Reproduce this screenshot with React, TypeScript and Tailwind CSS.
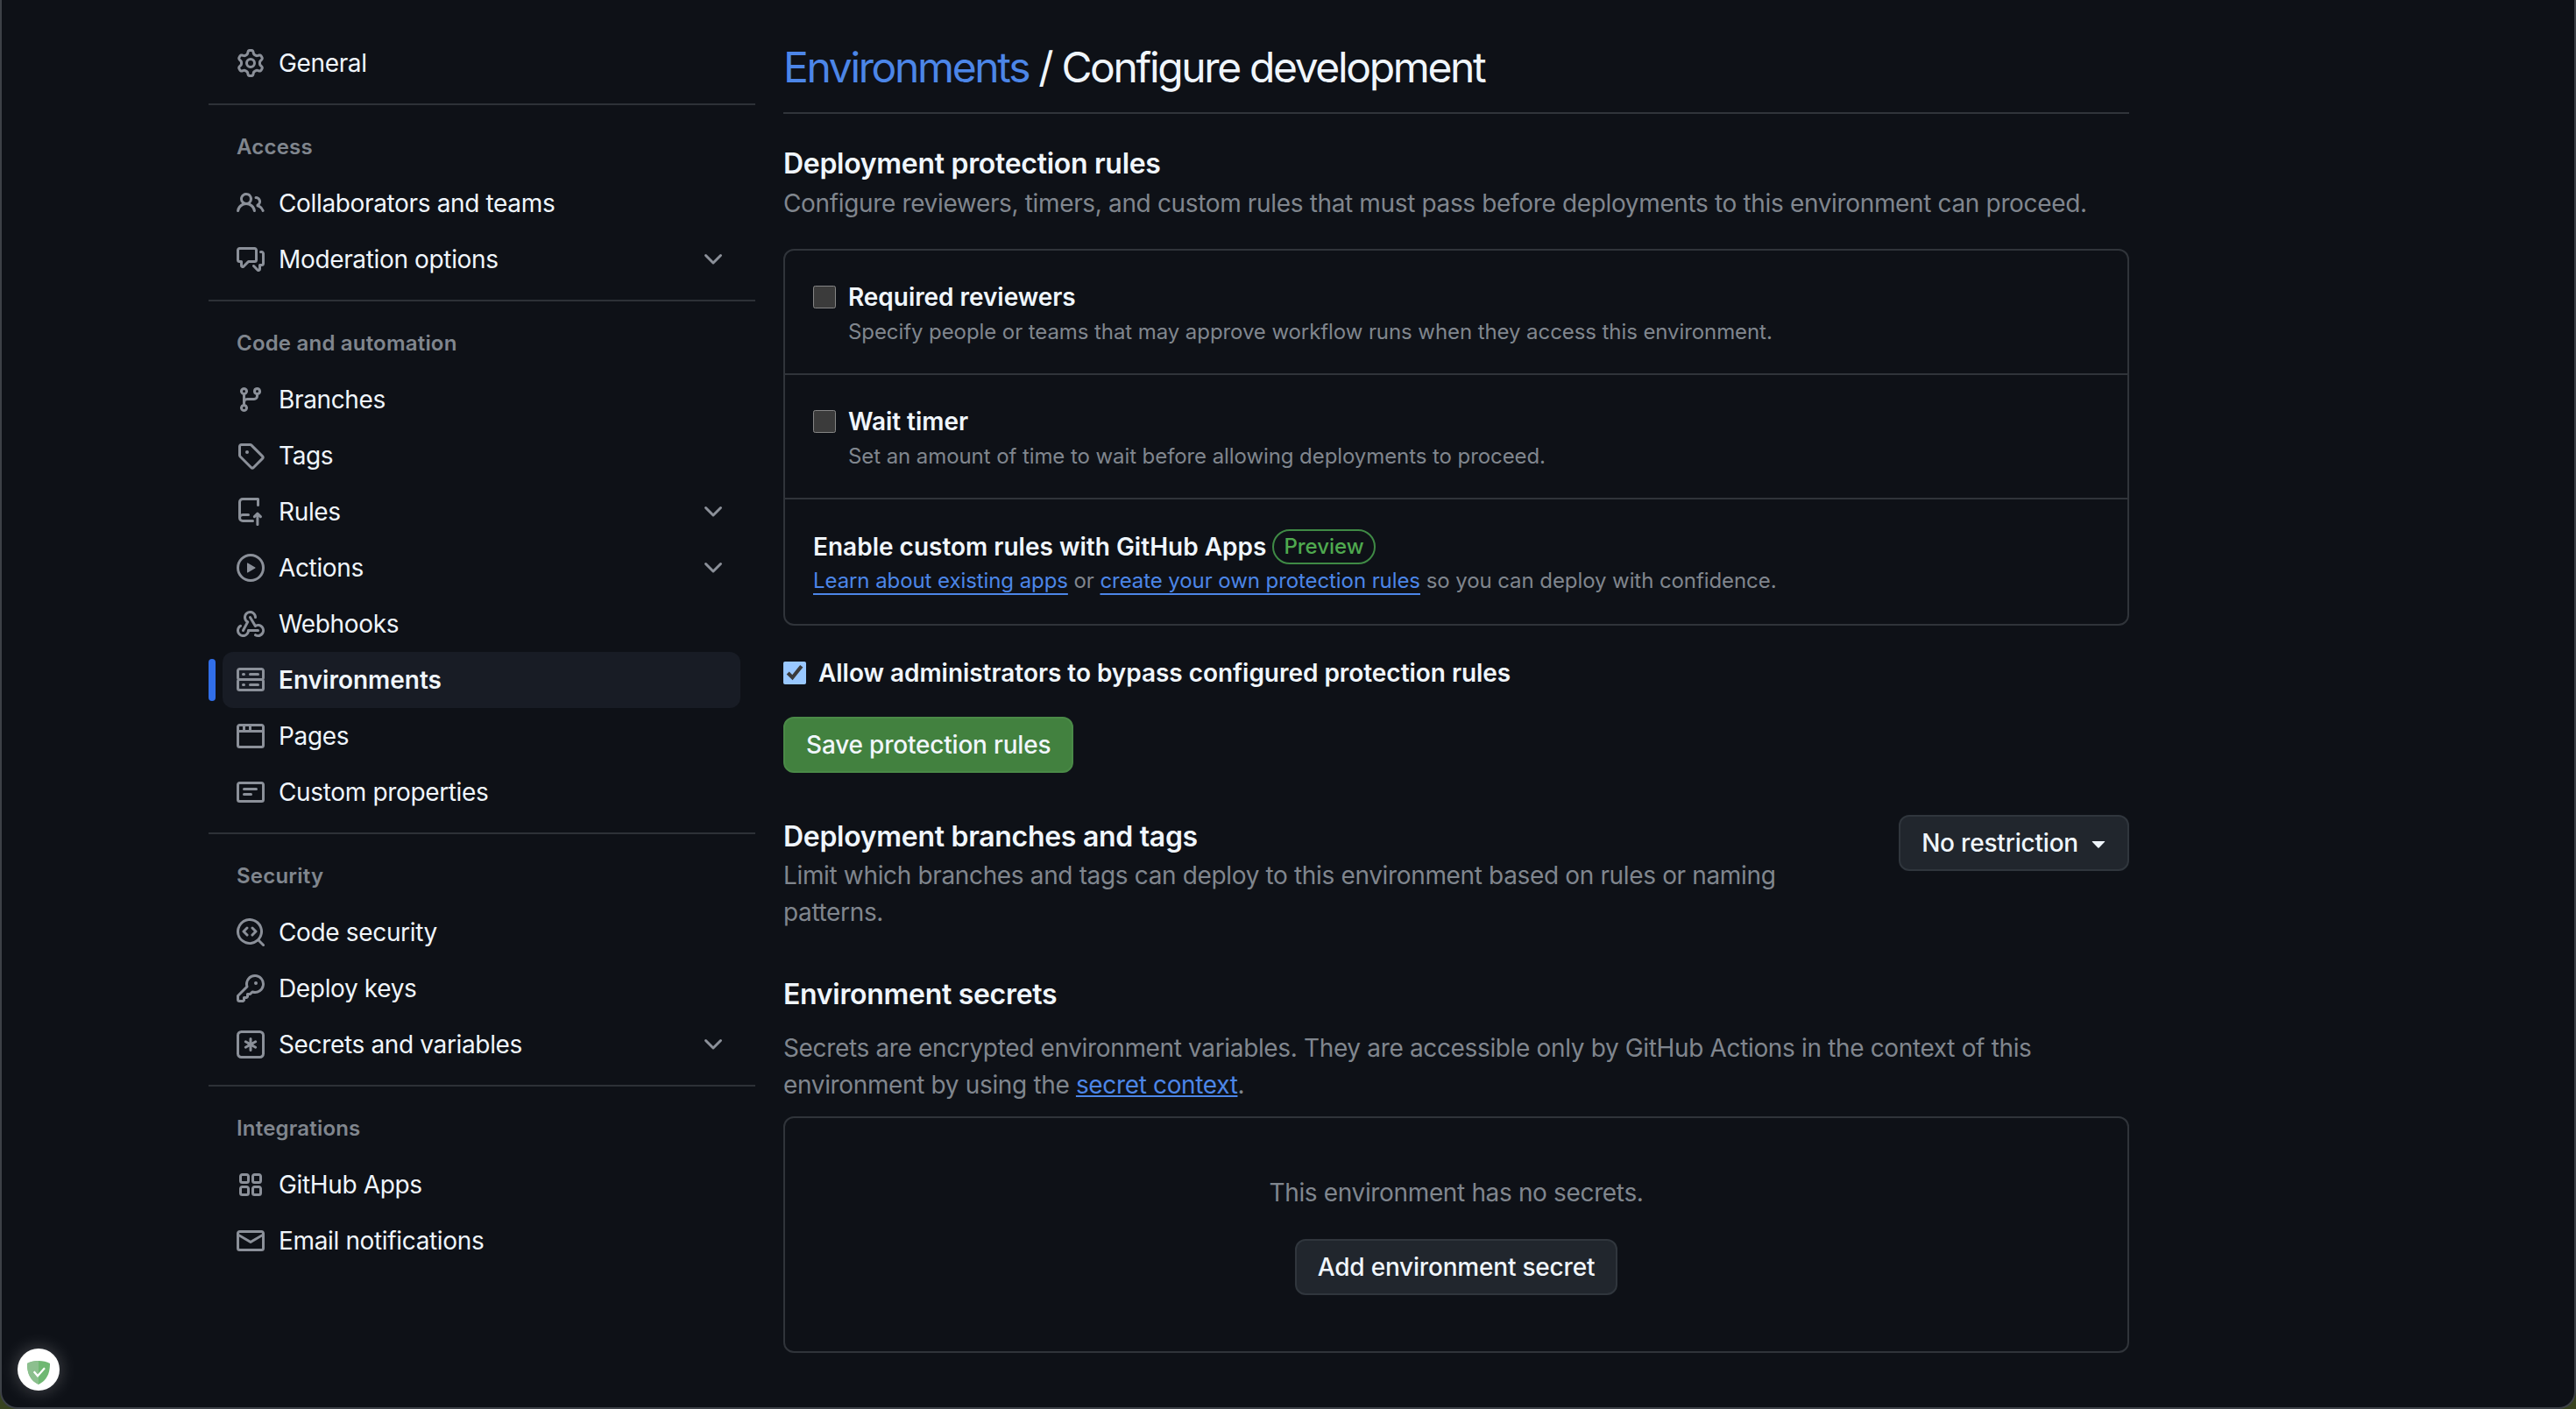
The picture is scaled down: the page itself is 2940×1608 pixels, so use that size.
import type { ReactNode } from 'react';

// octicons, 16px grid
const paths = {
  gear: 'M8 0a8.2 8.2 0 0 1 .701.031C9.444.095 9.99.645 10.16 1.29l.288 1.107c.018.066.079.158.212.224.231.114.454.243.668.386.123.082.233.09.299.071l1.103-.303c.644-.176 1.392.021 1.82.63.27.385.506.792.704 1.218.315.675.111 1.422-.364 1.891l-.814.806c-.049.048-.098.147-.088.294.016.257.016.515 0 .772-.01.147.038.246.088.294l.814.806c.475.469.679 1.216.364 1.891a7.977 7.977 0 0 1-.704 1.217c-.428.61-1.176.807-1.82.63l-1.102-.302c-.067-.019-.177-.011-.3.071a5.909 5.909 0 0 1-.668.386c-.133.066-.194.158-.211.224l-.29 1.106c-.168.646-.715 1.196-1.458 1.26a8.006 8.006 0 0 1-1.402 0c-.743-.064-1.289-.614-1.458-1.26l-.289-1.106c-.018-.066-.079-.158-.212-.224a5.738 5.738 0 0 1-.668-.386c-.123-.082-.233-.09-.299-.071l-1.103.303c-.644.176-1.392-.021-1.82-.63a8.12 8.12 0 0 1-.704-1.218c-.315-.675-.111-1.422.363-1.891l.815-.806c.05-.048.098-.147.088-.294a6.214 6.214 0 0 1 0-.772c.01-.147-.038-.246-.088-.294l-.815-.806C.635 6.045.431 5.298.746 4.623a7.92 7.92 0 0 1 .704-1.217c.428-.61 1.176-.807 1.82-.63l1.102.302c.067.019.177.011.3-.071.214-.143.437-.272.668-.386.133-.066.194-.158.211-.224l.29-1.106C6.009.645 6.556.095 7.299.03 7.53.01 7.764 0 8 0Zm-.571 1.525c-.036.003-.108.036-.137.146l-.289 1.105c-.147.561-.549.967-.998 1.189-.173.086-.34.183-.5.29-.417.278-.97.423-1.529.27l-1.103-.303c-.109-.03-.175.016-.195.045-.22.312-.412.644-.573.99-.014.031-.021.11.059.19l.815.806c.411.406.562.957.53 1.456a4.709 4.709 0 0 0 0 .582c.032.499-.119 1.05-.53 1.456l-.815.806c-.081.08-.073.159-.059.19.162.346.353.677.573.989.02.03.085.076.195.046l1.102-.303c.56-.153 1.113-.008 1.53.27.161.107.328.204.501.29.447.222.85.629.997 1.189l.289 1.105c.029.109.101.143.137.146a6.6 6.6 0 0 0 1.142 0c.036-.003.108-.036.137-.146l.289-1.105c.147-.561.549-.967.998-1.189.173-.086.34-.183.5-.29.417-.278.97-.423 1.529-.27l1.103.303c.109.029.175-.016.195-.045.22-.313.411-.644.573-.99.014-.031.021-.11-.059-.19l-.815-.806c-.411-.406-.562-.957-.53-1.456a4.709 4.709 0 0 0 0-.582c-.032-.499.119-1.05.53-1.456l.815-.806c.081-.08.073-.159.059-.19a6.464 6.464 0 0 0-.573-.989c-.02-.03-.085-.076-.195-.046l-1.102.303c-.56.153-1.113.008-1.53-.27a4.44 4.44 0 0 0-.501-.29c-.447-.222-.85-.629-.997-1.189l-.289-1.105c-.029-.11-.101-.143-.137-.146a6.6 6.6 0 0 0-1.142 0ZM11 8a3 3 0 1 1-6 0 3 3 0 0 1 6 0ZM9.5 8a1.5 1.5 0 1 0-3.001.001A1.5 1.5 0 0 0 9.5 8Z',
  people: 'M2 5.5a3.5 3.5 0 1 1 5.898 2.549 5.508 5.508 0 0 1 3.034 4.084.75.75 0 1 1-1.482.235 4 4 0 0 0-7.9 0 .75.75 0 0 1-1.482-.236A5.507 5.507 0 0 1 3.102 8.05 3.493 3.493 0 0 1 2 5.5ZM11 4a3.001 3.001 0 0 1 2.22 5.018 5.01 5.01 0 0 1 2.56 3.012.749.749 0 0 1-.885.954.752.752 0 0 1-.549-.514 3.507 3.507 0 0 0-2.522-2.372.75.75 0 0 1-.574-.73v-.352a.75.75 0 0 1 .416-.672A1.5 1.5 0 0 0 11 5.5.75.75 0 0 1 11 4Zm-5.5-.5a2 2 0 1 0-.001 3.999A2 2 0 0 0 5.5 3.5Z',
  discussion: 'M1.75 1h8.5c.966 0 1.75.784 1.75 1.75v5.5A1.75 1.75 0 0 1 10.25 10H7.061l-2.574 2.573A1.458 1.458 0 0 1 2 11.543V10h-.25A1.75 1.75 0 0 1 0 8.25v-5.5C0 1.784.784 1 1.75 1ZM1.5 2.75v5.5c0 .138.112.25.25.25h1a.75.75 0 0 1 .75.75v2.19l2.72-2.72a.749.749 0 0 1 .53-.22h3.5a.25.25 0 0 0 .25-.25v-5.5a.25.25 0 0 0-.25-.25h-8.5a.25.25 0 0 0-.25.25Zm13 2a.25.25 0 0 0-.25-.25h-.5a.75.75 0 0 1 0-1.5h.5c.966 0 1.75.784 1.75 1.75v5.5A1.75 1.75 0 0 1 14.25 12H14v1.543a1.458 1.458 0 0 1-2.487 1.03L9.22 12.28a.749.749 0 0 1 .326-1.275.749.749 0 0 1 .734.215l2.22 2.22v-2.19a.75.75 0 0 1 .75-.75h1a.25.25 0 0 0 .25-.25Z',
  branch: 'M9.5 3.25a2.25 2.25 0 1 1 3 2.122V6A2.5 2.5 0 0 1 10 8.5H6a1 1 0 0 0-1 1v1.128a2.251 2.251 0 1 1-1.5 0V5.372a2.25 2.25 0 1 1 1.5 0v1.836A2.493 2.493 0 0 1 6 7h4a1 1 0 0 0 1-1v-.628A2.25 2.25 0 0 1 9.5 3.25Zm-6 0a.75.75 0 1 0 1.5 0 .75.75 0 0 0-1.5 0Zm8.25-.75a.75.75 0 1 0 0 1.5.75.75 0 0 0 0-1.5ZM4.25 12a.75.75 0 1 0 0 1.5.75.75 0 0 0 0-1.5Z',
  tag: 'M1 7.775V2.75C1 1.784 1.784 1 2.75 1h5.025c.464 0 .91.184 1.238.513l6.25 6.25a1.75 1.75 0 0 1 0 2.474l-5.026 5.026a1.75 1.75 0 0 1-2.474 0l-6.25-6.25A1.752 1.752 0 0 1 1 7.775Zm1.5 0c0 .066.026.13.073.177l6.25 6.25a.25.25 0 0 0 .354 0l5.025-5.025a.25.25 0 0 0 0-.354l-6.25-6.25a.25.25 0 0 0-.177-.073H2.75a.25.25 0 0 0-.25.25ZM6 5a1 1 0 1 1 0 2 1 1 0 0 1 0-2Z',
  repoPush: 'M1 2.5A2.5 2.5 0 0 1 3.5 0h8.75a.75.75 0 0 1 .75.75v3.5a.75.75 0 0 1-1.5 0V1.5h-8a1 1 0 0 0-1 1v6.708A2.486 2.486 0 0 1 3.5 9h3.25a.75.75 0 0 1 0 1.5H3.5a1 1 0 0 0 0 2h5.75a.75.75 0 0 1 0 1.5H3.5A2.5 2.5 0 0 1 1 11.5Zm13.23 7.79h-.001l-1.75-1.75a.749.749 0 0 0-1.06 0l-1.75 1.75a.749.749 0 0 0 .326 1.275.749.749 0 0 0 .734-.215l.47-.47v4.44a.75.75 0 0 0 1.5 0v-4.44l.47.47a.75.75 0 0 0 1.061-1.06Z',
  play: 'M8 0a8 8 0 1 1 0 16A8 8 0 0 1 8 0ZM1.5 8a6.5 6.5 0 1 0 13 0 6.5 6.5 0 0 0-13 0Zm4.879-2.773 4.264 2.559a.25.25 0 0 1 0 .428l-4.264 2.559A.25.25 0 0 1 6 10.559V5.442a.25.25 0 0 1 .379-.215Z',
  webhook: 'M5.5 4.25a2.25 2.25 0 0 1 4.5 0 .75.75 0 0 0 1.5 0 3.75 3.75 0 1 0-6.14 2.889l-2.272 4.258a.75.75 0 0 0 1.324.706L7 7.25a.75.75 0 0 0-.309-1.015A2.25 2.25 0 0 1 5.5 4.25ZM7.364 3.607a.75.75 0 0 1 1.03.257l2.608 4.349a3.75 3.75 0 1 1-.628 6.785.75.75 0 0 1 .752-1.299 2.25 2.25 0 1 0-.033-3.88.75.75 0 0 1-1.03-.256L7.107 4.636a.75.75 0 0 1 .257-1.03ZM2.9 8.776A.75.75 0 0 1 2.625 9.8 2.25 2.25 0 1 0 6 11.75a.75.75 0 0 1 .75-.751h5.5a.75.75 0 0 1 0 1.5H7.425a3.751 3.751 0 1 1-5.55-3.998.75.75 0 0 1 1.024.274Z',
  server: 'M1.75 1h12.5c.966 0 1.75.784 1.75 1.75v4c0 .372-.116.717-.314 1 .198.283.314.628.314 1v4a1.75 1.75 0 0 1-1.75 1.75H1.75A1.75 1.75 0 0 1 0 12.75v-4c0-.358.109-.707.314-1a1.739 1.739 0 0 1-.314-1v-4C0 1.784.784 1 1.75 1ZM1.5 2.75v4c0 .138.112.25.25.25h12.5a.25.25 0 0 0 .25-.25v-4a.25.25 0 0 0-.25-.25H1.75a.25.25 0 0 0-.25.25Zm.25 5.75a.25.25 0 0 0-.25.25v4c0 .138.112.25.25.25h12.5a.25.25 0 0 0 .25-.25v-4a.25.25 0 0 0-.25-.25ZM7 4.75A.75.75 0 0 1 7.75 4h4.5a.75.75 0 0 1 0 1.5h-4.5A.75.75 0 0 1 7 4.75ZM7.75 10h4.5a.75.75 0 0 1 0 1.5h-4.5a.75.75 0 0 1 0-1.5ZM3 4.75A.75.75 0 0 1 3.75 4h.5a.75.75 0 0 1 0 1.5h-.5A.75.75 0 0 1 3 4.75ZM3.75 10h.5a.75.75 0 0 1 0 1.5h-.5a.75.75 0 0 1 0-1.5Z',
  browser: 'M0 2.75C0 1.784.784 1 1.75 1h12.5c.966 0 1.75.784 1.75 1.75v10.5A1.75 1.75 0 0 1 14.25 15H1.75A1.75 1.75 0 0 1 0 13.25ZM14.5 6h-13v7.25c0 .138.112.25.25.25h12.5a.25.25 0 0 0 .25-.25Zm-6-3.5v2h6V2.75a.25.25 0 0 0-.25-.25ZM5 2.5v2h2v-2Zm-3.25 0a.25.25 0 0 0-.25.25V4.5h2v-2Z',
  note: 'M0 3.75C0 2.784.784 2 1.75 2h12.5c.966 0 1.75.784 1.75 1.75v8.5A1.75 1.75 0 0 1 14.25 14H1.75A1.75 1.75 0 0 1 0 12.25Zm1.75-.25a.25.25 0 0 0-.25.25v8.5c0 .138.112.25.25.25h12.5a.25.25 0 0 0 .25-.25v-8.5a.25.25 0 0 0-.25-.25ZM3.5 6.25a.75.75 0 0 1 .75-.75h7a.75.75 0 0 1 0 1.5h-7a.75.75 0 0 1-.75-.75Zm.75 2.25h4a.75.75 0 0 1 0 1.5h-4a.75.75 0 0 1 0-1.5Z',
  codescan: 'M8.47 4.97a.75.75 0 0 0 0 1.06L9.94 7.5 8.47 8.97a.75.75 0 1 0 1.06 1.06l2-2a.75.75 0 0 0 0-1.06l-2-2a.75.75 0 0 0-1.06 0ZM6.53 6.03a.75.75 0 0 0-1.06-1.06l-2 2a.75.75 0 0 0 0 1.06l2 2a.75.75 0 1 0 1.06-1.06L5.06 7.5l1.47-1.47ZM12.246 13.307a7.501 7.501 0 1 1 1.06-1.06l2.474 2.473a.749.749 0 0 1-.326 1.275.749.749 0 0 1-.734-.215ZM1.5 7.5a6.002 6.002 0 0 0 3.608 5.504 6.002 6.002 0 0 0 6.486-1.117.748.748 0 0 1 .292-.293A6 6 0 1 0 1.5 7.5Z',
  key: 'M10.5 0a5.499 5.499 0 1 1-1.288 10.848l-.932.932a.749.749 0 0 1-.53.22H7v.75a.749.749 0 0 1-.22.53l-.5.5a.749.749 0 0 1-.53.22H5v.75a.749.749 0 0 1-.22.53l-.5.5a.749.749 0 0 1-.53.22h-2A1.75 1.75 0 0 1 0 14.25v-2c0-.199.079-.389.22-.53l4.932-4.932A5.5 5.5 0 0 1 10.5 0Zm-4 5.5c-.001.431.069.86.205 1.269a.75.75 0 0 1-.181.768L1.5 12.56v1.69c0 .138.112.25.25.25h1.69l.06-.06v-1.19a.75.75 0 0 1 .75-.75h1.19l.06-.06v-1.19a.75.75 0 0 1 .75-.75h1.19l1.023-1.025a.75.75 0 0 1 .768-.18A4 4 0 1 0 6.5 5.5ZM11 6a1 1 0 1 1 0-2 1 1 0 0 1 0 2Z',
  keyAsterisk: 'M0 2.75A2.75 2.75 0 0 1 2.75 0h10.5A2.75 2.75 0 0 1 16 2.75v10.5A2.75 2.75 0 0 1 13.25 16H2.75A2.75 2.75 0 0 1 0 13.25ZM2.75 1.5c-.69 0-1.25.56-1.25 1.25v10.5c0 .69.56 1.25 1.25 1.25h10.5c.69 0 1.25-.56 1.25-1.25V2.75c0-.69-.56-1.25-1.25-1.25ZM8 4a.75.75 0 0 1 .75.75V6.7l1.69-.975a.75.75 0 0 1 .75 1.3L9.5 8l1.69.976a.75.75 0 0 1-.75 1.298L8.75 9.3v1.951a.75.75 0 0 1-1.5 0V9.299l-1.69.976a.75.75 0 0 1-.75-1.3L6.5 8l-1.69-.975a.75.75 0 0 1 .75-1.3l1.69.976V4.75A.75.75 0 0 1 8 4Z',
  apps: 'M1.5 3.25c0-.966.784-1.75 1.75-1.75h2.5c.966 0 1.75.784 1.75 1.75v2.5A1.75 1.75 0 0 1 5.75 7.5h-2.5A1.75 1.75 0 0 1 1.5 5.75Zm7 0c0-.966.784-1.75 1.75-1.75h2.5c.966 0 1.75.784 1.75 1.75v2.5a1.75 1.75 0 0 1-1.75 1.75h-2.5A1.75 1.75 0 0 1 8.5 5.75Zm-7 7c0-.966.784-1.75 1.75-1.75h2.5c.966 0 1.75.784 1.75 1.75v2.5a1.75 1.75 0 0 1-1.75 1.75h-2.5a1.75 1.75 0 0 1-1.75-1.75Zm7 0c0-.966.784-1.75 1.75-1.75h2.5c.966 0 1.75.784 1.75 1.75v2.5a1.75 1.75 0 0 1-1.75 1.75h-2.5a1.75 1.75 0 0 1-1.75-1.75ZM3.25 3a.25.25 0 0 0-.25.25v2.5c0 .138.112.25.25.25h2.5A.25.25 0 0 0 6 5.75v-2.5A.25.25 0 0 0 5.75 3Zm7 0a.25.25 0 0 0-.25.25v2.5c0 .138.112.25.25.25h2.5a.25.25 0 0 0 .25-.25v-2.5a.25.25 0 0 0-.25-.25Zm-7 7a.25.25 0 0 0-.25.25v2.5c0 .138.112.25.25.25h2.5a.25.25 0 0 0 .25-.25v-2.5a.25.25 0 0 0-.25-.25Zm7 0a.25.25 0 0 0-.25.25v2.5c0 .138.112.25.25.25h2.5a.25.25 0 0 0 .25-.25v-2.5a.25.25 0 0 0-.25-.25Z',
  mail: 'M1.75 2h12.5c.966 0 1.75.784 1.75 1.75v8.5A1.75 1.75 0 0 1 14.25 14H1.75A1.75 1.75 0 0 1 0 12.25v-8.5C0 2.784.784 2 1.75 2ZM1.5 12.251c0 .138.112.25.25.25h12.5a.25.25 0 0 0 .25-.25V5.809L8.38 9.397a.75.75 0 0 1-.76 0L1.5 5.809v6.442Zm13-8.181v-.32a.25.25 0 0 0-.25-.25H1.75a.25.25 0 0 0-.25.25v.32L8 7.88Z',
  chevronDown: 'M12.78 5.22a.749.749 0 0 1 0 1.06l-4.25 4.25a.749.749 0 0 1-1.06 0L3.22 6.28a.749.749 0 1 1 1.06-1.06L8 8.939l3.72-3.719a.749.749 0 0 1 1.06 0Z',
  triangleDown: 'm4.427 7.427 3.396 3.396a.25.25 0 0 0 .354 0l3.396-3.396A.25.25 0 0 0 11.396 7H4.604a.25.25 0 0 0-.177.427Z',
};

type IconName = keyof typeof paths;

function Octicon({ name, className }: { name: IconName; className?: string }) {
  return (
    <svg viewBox="0 0 16 16" fill="currentColor" className={className}>
      <path d={paths[name]} />
    </svg>
  );
}

interface NavItem {
  label: string;
  icon: IconName;
  chevron?: boolean;
  active?: boolean;
}

interface NavSection {
  title: string;
  items: NavItem[];
}

const sections: NavSection[] = [
  {
    title: 'Access',
    items: [
      { label: 'Collaborators and teams', icon: 'people' },
      { label: 'Moderation options', icon: 'discussion', chevron: true },
    ],
  },
  {
    title: 'Code and automation',
    items: [
      { label: 'Branches', icon: 'branch' },
      { label: 'Tags', icon: 'tag' },
      { label: 'Rules', icon: 'repoPush', chevron: true },
      { label: 'Actions', icon: 'play', chevron: true },
      { label: 'Webhooks', icon: 'webhook' },
      { label: 'Environments', icon: 'server', active: true },
      { label: 'Pages', icon: 'browser' },
      { label: 'Custom properties', icon: 'note' },
    ],
  },
  {
    title: 'Security',
    items: [
      { label: 'Code security', icon: 'codescan' },
      { label: 'Deploy keys', icon: 'key' },
      { label: 'Secrets and variables', icon: 'keyAsterisk', chevron: true },
    ],
  },
  {
    title: 'Integrations',
    items: [
      { label: 'GitHub Apps', icon: 'apps' },
      { label: 'Email notifications', icon: 'mail' },
    ],
  },
];

function NavRow({ item }: { item: NavItem }) {
  return (
    <div className="relative h-[64px] pl-[16px]">
      {item.active && <span className="absolute left-0 top-[8px] h-[48px] w-[8px] rounded-[4px] bg-[#316ee8]" />}
      <div
        className={`flex h-full w-[591px] items-center gap-[16px] rounded-[12px] pl-[16px] pr-[15px] ${
          item.active ? 'bg-[#181c25]' : ''
        }`}
      >
        <Octicon name={item.icon} className="h-[32px] w-[32px] shrink-0 text-[#8b9099]" />
        <span
          className={`flex-1 text-[28px] leading-[40px] text-[#f0f6fc] ${
            item.active ? 'font-semibold' : 'tracking-[-0.35px]'
          }`}
        >
          {item.label}
        </span>
        {item.chevron && <Octicon name="chevronDown" className="h-[32px] w-[32px] text-[#8b9099]" />}
      </div>
    </div>
  );
}

function Sidebar() {
  return (
    <nav className="ml-[236px] w-[624px] shrink-0 pt-[40px]">
      <NavRow item={{ label: 'General', icon: 'gear' }} />
      {sections.map((section) => (
        <section key={section.title}>
          <div className="mt-[14px] h-[2px] bg-[#2d3137]" />
          <h2 className="mb-[16px] mt-[32px] pl-[32px] text-[24px] font-semibold leading-[32px] tracking-[0.2px] text-[#80868e]">
            {section.title}
          </h2>
          {section.items.map((item) => (
            <NavRow key={item.label} item={item} />
          ))}
        </section>
      ))}
    </nav>
  );
}

function RuleRow({ title, text }: { title: string; text: string }) {
  return (
    <div className="flex border-b-2 border-[#30343a] pb-[27px] pl-[32px] pt-[33px]">
      <input type="checkbox" readOnly className="mr-[14px] mt-[7px] h-[26px] w-[26px] [color-scheme:dark]" />
      <div>
        <div className="text-[28px] font-semibold leading-[40px] tracking-[-0.05px] text-[#f0f6fc]">{title}</div>
        <div className="text-[24px] leading-[40px] tracking-[-0.08px] text-[#80868e]">{text}</div>
      </div>
    </div>
  );
}

function Button({ children, className }: { children: ReactNode; className?: string }) {
  return (
    <button
      className={`flex h-[64px] items-center rounded-[12px] border-2 border-[#30363d] bg-[#21262d] px-[24px] text-[28px] font-medium tracking-[-0.2px] text-[#f0f6fc] ${className ?? ''}`}
    >
      {children}
    </button>
  );
}

export default function App() {
  return (
    <div className="h-[1608px] overflow-hidden bg-[#38431f]">
      <div className="relative flex h-full overflow-hidden rounded-b-[20px] border-x-2 border-b-2 border-[#3d4147] bg-[#0e1117] font-['Inter',sans-serif]">
        <Sidebar />
        <main className="ml-[32px] w-[1536px] shrink-0 pt-[47px]">
          <h1 className="border-b-2 border-[#30343a] pb-[21px] text-[48px] leading-[60px] tracking-[-2.36px] text-[#f0f6fc]">
            <a className="text-[#4c86e8]">Environments</a> / Configure development
          </h1>

          <h2 className="mt-[33px] text-[32px] font-semibold leading-[48px] tracking-[-0.3px] text-[#f0f6fc]">
            Deployment protection rules
          </h2>
          <p className="text-[28px] leading-[42px] tracking-[-0.35px] text-[#80868e]">
            Configure reviewers, timers, and custom rules that must pass before deployments to this environment can proceed.
          </p>

          <div className="mt-[31px] rounded-[12px] border-2 border-[#30343a]">
            <RuleRow
              title="Required reviewers"
              text="Specify people or teams that may approve workflow runs when they access this environment."
            />
            <RuleRow title="Wait timer" text="Set an amount of time to wait before allowing deployments to proceed." />
            <div className="h-[142px] pl-[32px] pt-[34px]">
              <div className="flex items-center text-[28px] font-semibold leading-[40px] text-[#f0f6fc]">
                Enable custom rules with GitHub Apps
                <span className="ml-[7px] h-[40px] rounded-full border-2 border-[#3f8a45] px-[11px] text-[24px] font-medium leading-[36px] text-[#4fa94f]">
                  Preview
                </span>
              </div>
              <div className="-mt-[1px] text-[24px] leading-[40px] tracking-[-0.08px] text-[#80868e]">
                <a className="text-[#4c86e8] underline decoration-2 underline-offset-[6px]">Learn about existing apps</a> or{' '}
                <a className="text-[#4c86e8] underline decoration-2 underline-offset-[6px]">create your own protection rules</a>{' '}
                so you can deploy with confidence.
              </div>
            </div>
          </div>

          <label className="mt-[34px] flex h-[39px] items-center gap-[14px] text-[28px] font-semibold tracking-[-0.04px] text-[#f0f6fc]">
            <input type="checkbox" checked readOnly className="h-[26px] w-[26px] [color-scheme:dark]" />
            Allow administrators to bypass configured protection rules
          </label>

          <button className="mt-[31px] flex h-[64px] items-center rounded-[12px] border-2 border-[#4a8a47] bg-[#42813f] px-[24px] text-[28px] font-medium tracking-[-0.2px] text-[#f0f6fc]">
            Save protection rules
          </button>

          <div className="mt-[49px] flex justify-between">
            <div className="w-[1240px]">
              <h2 className="text-[32px] font-semibold leading-[47px] tracking-[-0.3px] text-[#f0f6fc]">
                Deployment branches and tags
              </h2>
              <p className="text-[28px] leading-[42px] tracking-[-0.35px] text-[#80868e]">
                Limit which branches and tags can deploy to this environment based on rules or naming patterns.
              </p>
            </div>
            <Button className="-mt-[1px]">
              No restriction
              <Octicon name="triangleDown" className="ml-[7px] mr-[-7px] h-[32px] w-[32px] text-[#f0f6fc]" />
            </Button>
          </div>

          <h2 className="mt-[49px] text-[32px] font-semibold leading-[48px] tracking-[-0.3px] text-[#f0f6fc]">
            Environment secrets
          </h2>
          <p className="mt-[16px] text-[28px] leading-[42px] tracking-[-0.35px] text-[#80868e]">
            Secrets are encrypted environment variables. They are accessible only by GitHub Actions in the context of this
            environment by using the <a className="text-[#4c86e8] underline">secret context</a>.
          </p>

          <div className="mt-[15px] flex h-[270px] flex-col items-center rounded-[12px] border-2 border-[#30343a] pt-[65px]">
            <p className="text-[28px] leading-[40px] tracking-[-0.35px] text-[#80868e]">This environment has no secrets.</p>
            <Button className="mt-[33px]">Add environment secret</Button>
          </div>
        </main>

        {/* browser extension badge */}
        <div className="absolute bottom-[19px] left-[18px] flex h-[48px] w-[48px] items-center justify-center rounded-full bg-white shadow-[0_0_20px_rgba(255,255,255,0.25)]">
          <svg viewBox="0 0 32 32" className="mt-[6px] h-[32px] w-[32px]">
            <path d="M16 3C11 3 6.5 4.3 3 6c0 7 .8 18 13 24C28 24 29 13 29 6c-3.5-1.7-8-3-13-3z" fill="#6fb872" />
            <path d="M16 3C11 3 6.5 4.3 3 6c0 7 .8 18 13 24z" fill="#8cbf8e" />
            <path d="M10.7 15.3l4.3 5L23 11.3" fill="none" stroke="#fff" strokeWidth="2.2" />
          </svg>
        </div>
      </div>
    </div>
  );
}
